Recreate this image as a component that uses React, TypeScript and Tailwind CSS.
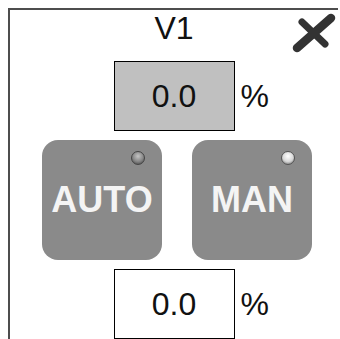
import React from 'react';

function Led({ on }: { on: boolean }) {
  return (
    <div
      className={
        on
          ? 'absolute top-[11px] right-[17px] w-[14px] h-[14px] rounded-full border border-[#555] bg-[radial-gradient(circle_at_50%_35%,#ffffff,#d6d6d6_55%,#5a5a5a)]'
          : 'absolute top-[11px] right-[17px] w-[14px] h-[14px] rounded-full border border-[#444] bg-[radial-gradient(circle_at_50%_35%,#c4c4c4,#858585_55%,#3c3c3c)]'
      }
    />
  );
}

function ModeButton({ label, on }: { label: string; on: boolean }) {
  return (
    <div className="relative w-[120px] h-[120px] rounded-[16px] bg-[#8a8a8a] flex items-center justify-center">
      <Led on={on} />
      <span className="text-[36px] font-bold text-[#f4f4f4] leading-none">{label}</span>
    </div>
  );
}

function ValueRow({ value, shaded }: { value: string; shaded: boolean }) {
  return (
    <div className="grid grid-cols-[1fr_auto_1fr] items-center">
      <div />
      <div
        className={`w-[121px] h-[70px] border border-black flex items-center justify-center text-[32px] text-[#111] ${
          shaded ? 'bg-[#c0c0c0]' : 'bg-white'
        }`}
      >
        {value}
      </div>
      <span className="pl-[6px] text-[32px] text-[#111]">%</span>
    </div>
  );
}

export default function App() {
  return (
    <div className="w-[340px] h-[339px] overflow-hidden bg-white pl-2 pt-2 font-['Liberation_Sans',Arial,sans-serif]">
      <div className="w-[330px] h-[340px] border-l-2 border-t-2 border-[#4d4d4d] flex flex-col">
        {/* Title */}
        <div className="grid grid-cols-[1fr_auto_1fr] items-start pt-[3px]">
          <div />
          <span className="-mt-px text-[32px] leading-[32px] text-[#111]">V1</span>
          <svg className="justify-self-end mr-[2px]" width="46" height="40" viewBox="0 0 46 40">
            <line x1="12" y1="9" x2="35" y2="31" stroke="#333" strokeWidth="7" strokeLinecap="round" />
            <line x1="41" y1="5" x2="7" y2="35" stroke="#333" strokeWidth="8.5" strokeLinecap="round" />
          </svg>
        </div>

        <div className="mt-[8px]">
          <ValueRow value="0.0" shaded />
        </div>

        {/* Mode buttons */}
        <div className="flex mt-[9px] pl-[32px] gap-[30px]">
          <ModeButton label="AUTO" on={false} />
          <ModeButton label="MAN" on />
        </div>

        <div className="mt-[9px]">
          <ValueRow value="0.0" shaded={false} />
        </div>
      </div>
    </div>
  );
}
